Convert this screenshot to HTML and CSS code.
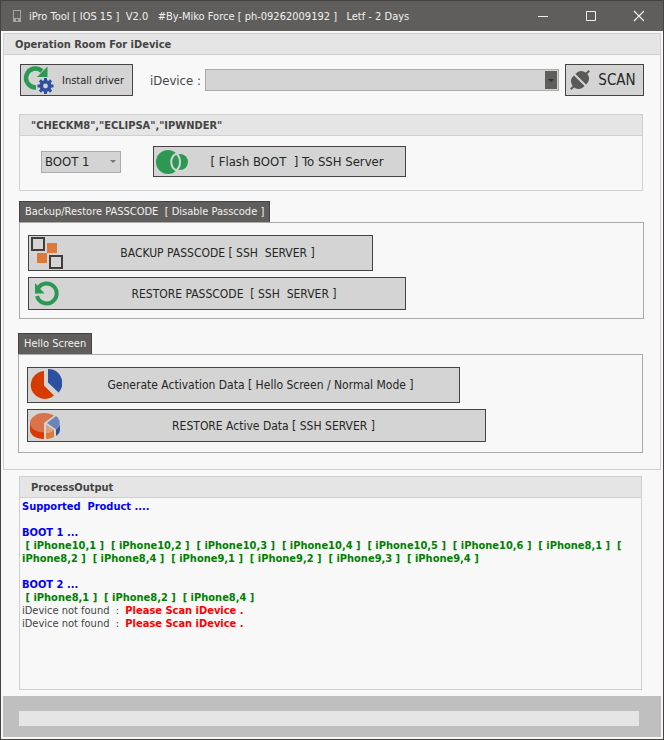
FILE: index.html
```
<!DOCTYPE html>
<html lang="en">
<head>
  <meta charset="UTF-8">
  <title>iPro Tool</title>
  <link rel="stylesheet" href="styles.css">
</head>
<body>
  <div class="window">
    <header class="titlebar">
      <svg class="app-icon" width="8" height="12" viewBox="0 0 8 12">
        <path fill="#a8a6a4" fill-rule="evenodd" d="M0 0h8v12H0zM1 1v7h6V1zM3 9v2h2V9z"/>
      </svg>
      <h1>iPro Tool [ IOS 15 ]  V2.0   #By-Miko Force [ ph-09262009192 ]   Letf - 2 Days</h1>
      <div class="window-buttons">
        <button type="button" aria-label="Minimize">
          <svg width="12" height="12" viewBox="0 0 12 12"><path d="M1 6.500h10" stroke="#f0f0f0"/></svg>
        </button>
        <button type="button" aria-label="Maximize">
          <svg width="12" height="12" viewBox="0 0 12 12"><path d="M1.500 1.500h9v9h-9z" fill="none" stroke="#f0f0f0"/></svg>
        </button>
        <button type="button" aria-label="Close">
          <svg width="12" height="12" viewBox="0 0 12 12"><path d="M1 1l10 10M11 1L1 11" fill="none" stroke="#f0f0f0" stroke-width="1.200"/></svg>
        </button>
      </div>
    </header>

    <main class="room">
      <h2 class="room-title">Operation Room For iDevice</h2>

      <div class="toolbar">
        <button type="button" class="btn install">
          <svg width="32" height="30" viewBox="0 0 32 30">
            <path d="M20 6A9.500 9.500 0 1 0 14 22.500" fill="none" stroke="#2c9852" stroke-width="4.500"/>
            <path d="M25.500 1.500v10.500H15z" fill="#2c9852"/>
            <circle cx="23.500" cy="21" r="4.200" fill="none" stroke="#2d50a0" stroke-width="3.600"/>
            <path d="M23.500 13v3M23.500 26v3M15.500 21h3M28.500 21h3M17.900 15.400l2 2M27.100 24.600l2 2M29.100 15.400l-2 2M19.900 24.600l-2 2" stroke="#2d50a0" stroke-width="3"/>
          </svg>
          <span>Install driver</span>
        </button>
        <label for="device">iDevice :</label>
        <div class="picker device-picker">
          <select id="device"><option></option></select>
          <span class="arrow"></span>
        </div>
        <button type="button" class="btn scan">
          <svg width="22" height="22" viewBox="0 0 22 22">
            <g transform="rotate(-45 11 11)" fill="#5a5958">
              <path d="M-2 10h5v2h-5zM19 10h5v2h-5z"/>
              <path d="M10 3.500v15H8.500A7 7.500 0 0 1 8.500 3.500z"/>
              <path d="M12 3.500v15h1.500a7 7.500 0 0 0 0-15z"/>
            </g>
          </svg>
          <span>SCAN</span>
        </button>
      </div>

      <section class="group">
        <h3 class="group-title">"CHECKM8","ECLIPSA","IPWNDER"</h3>
        <div class="boot-row">
          <div class="picker boot-picker">
            <select aria-label="Boot"><option>BOOT 1</option><option>BOOT 2</option></select>
            <span class="arrow"></span>
          </div>
          <button type="button" class="btn flash">
            <svg width="34" height="26" viewBox="0 0 34 26">
              <circle cx="13" cy="13" r="12" fill="#2c9852"/>
              <circle cx="25" cy="13" r="8" fill="#2c9852"/>
              <path d="M21.500 4.500a12 12 0 0 1 0 17a9.500 9.500 0 0 1 0-17z" fill="#2c9852" stroke="#d4d4d4" stroke-width="2"/>
            </svg>
            <span>[ Flash BOOT  ] To SSH Server</span>
          </button>
        </div>
      </section>

      <section class="tab-group">
        <h3 class="tab">Backup/Restore PASSCODE  [ Disable Passcode ]</h3>
        <div class="tab-body">
          <button type="button" class="btn tall backup">
            <svg width="34" height="34" viewBox="0 0 34 34">
              <path d="M18 7h10v10H18zM8 17h10v10H8z" fill="#dd7a3a"/>
              <path d="M3 2h12v12H3zM21 20h12v12H21z" fill="#d4d4d4" stroke="#3f3e3d" stroke-width="2"/>
            </svg>
            <span>BACKUP PASSCODE [ SSH  SERVER ]</span>
          </button>
          <button type="button" class="btn restore">
            <svg width="34" height="30" viewBox="0 0 34 30">
              <path d="M9 9.500A10 10 0 1 1 8 17" fill="none" stroke="#2c9852" stroke-width="4"/>
              <path d="M6 4v10.500h9.500z" fill="#2c9852"/>
            </svg>
            <span>RESTORE PASSCODE  [ SSH  SERVER ]</span>
          </button>
        </div>
      </section>

      <section class="tab-group">
        <h3 class="tab">Hello Screen</h3>
        <div class="tab-body">
          <button type="button" class="btn tall generate">
            <svg width="34" height="34" viewBox="0 0 34 34">
              <path d="M16 3v14.500l10 10A14 14 0 1 1 16 3z" fill="#d83b01"/>
              <path d="M20 1a14 14 0 0 1 10.500 23.500L20 14.500z" fill="#2d50a0"/>
            </svg>
            <span>Generate Activation Data [ Hello Screen / Normal Mode ]</span>
          </button>
          <button type="button" class="btn active-data">
            <svg width="34" height="30" viewBox="0 0 34 30">
              <path d="M2 12v7c0 5 6 9 14 9v-8z" fill="#d83b01"/>
              <path d="M16 12v9.500C8 21.500 2 17 2 12S8 2 16 2c4 0 7 1 10 2.500z" fill="#d9734c"/>
              <path d="M18 13.500V22c3 0 6-1 8-3z" fill="#dca077"/>
              <path d="M18 22c3 0 6-1 8-3v7c-2 1-5 2-8 2z" fill="#dd7a3a"/>
              <path d="M19 12l9-7c5 4 5 9 0 13.500z" fill="#6c85b8"/>
              <path d="M28 18.500c3-2.500 4-4 4-6.500v6c0 3-1 5-4 7z" fill="#2d50a0"/>
            </svg>
            <span>RESTORE Active Data [ SSH SERVER ]</span>
          </button>
        </div>
      </section>
    </main>

    <section class="group output">
      <h3 class="group-title">ProcessOutput</h3>
      <div class="log">
        <p class="info">Supported  Product ....</p>
        <p class="info"> </p>
        <p class="info">BOOT 1 ...</p>
        <p class="models"> [ iPhone10,1 ]  [ iPhone10,2 ]  [ iPhone10,3 ]  [ iPhone10,4 ]  [ iPhone10,5 ]  [ iPhone10,6 ]  [ iPhone8,1 ]  [ iPhone8,2 ]  [ iPhone8,4 ]  [ iPhone9,1 ]  [ iPhone9,2 ]  [ iPhone9,3 ]  [ iPhone9,4 ]</p>
        <p class="info"> </p>
        <p class="info">BOOT 2 ...</p>
        <p class="models"> [ iPhone8,1 ]  [ iPhone8,2 ]  [ iPhone8,4 ]</p>
        <p>iDevice not found  :  <strong>Please Scan iDevice .</strong></p>
        <p>iDevice not found  :  <strong>Please Scan iDevice .</strong></p>
      </div>
    </section>

    <footer class="statusbar">
      <progress value="0" max="100" aria-label="Progress"></progress>
    </footer>
  </div>
</body>
</html>
```

FILE: styles.css
```
* {
  box-sizing: border-box;
}

body {
  margin: 0;
  background: #f8f8f8;
  color: #444;
  font-family: "DejaVu Sans Condensed", "Noto Sans", sans-serif;
  font-size: 11px;
}

h1, h2, h3, p {
  margin: 0;
  font-size: 11px;
  white-space: pre-wrap;
}

button, select {
  font-family: inherit;
  color: #262626;
}

.window {
  display: flex;
  flex-direction: column;
  min-height: 100vh;
  border: 1px solid #444342;
}

/* title bar */
.titlebar {
  display: flex;
  align-items: center;
  height: 30px;
  padding-left: 12px;
  background: #5f5e5c;
  color: #f0f0f0;
}

.titlebar h1 {
  flex: 1;
  margin-left: 8px;
  font-weight: normal;
}

.window-buttons {
  display: flex;
}

.window-buttons button {
  display: flex;
  align-items: center;
  justify-content: center;
  width: 48px;
  height: 30px;
  padding: 0;
  border: none;
  background: none;
}

/* main panel */
.room {
  margin: 2px 2px 0;
  padding-bottom: 16px;
  border: 1px solid #d0d0d0;
}

.room-title,
.group-title {
  height: 21px;
  padding-left: 11px;
  background: #e5e5e5;
  border-bottom: 1px solid #d0d0d0;
  line-height: 21px;
}

.toolbar {
  display: flex;
  align-items: center;
  margin: 9px 16px 0;
}

.toolbar label {
  margin: 0 4px 0 17px;
  font-size: 13px;
}

.btn {
  display: flex;
  align-items: center;
  height: 33px;
  padding: 0 0 0 1px;
  border: 1px solid #444342;
  background: #d4d4d4;
  font-size: 12px;
  white-space: pre;
}

.btn svg {
  flex: none;
}

.btn span {
  flex: 1;
  text-align: center;
}

.install {
  width: 113px;
  height: 32px;
  font-size: 11px;
}

.scan {
  width: 79px;
  height: 32px;
  margin-left: 6px;
  padding-left: 3px;
  font-size: 15px;
}

.picker {
  position: relative;
  height: 22px;
}

.picker select {
  appearance: none;
  width: 100%;
  height: 22px;
  padding: 0 3px;
  border: 1px solid #ababab;
  border-radius: 0;
  background: #d4d4d4;
  font-size: 13px;
}

.picker .arrow {
  position: absolute;
  top: 2px;
  right: 2px;
  display: flex;
  align-items: center;
  justify-content: center;
  width: 12px;
  height: 18px;
  pointer-events: none;
}

.picker .arrow::after {
  content: "";
  border: 3px solid transparent;
  border-top-color: #777;
  border-bottom: none;
}

.device-picker {
  flex: 1;
}

.device-picker .arrow {
  background: #5f5e5c;
}

.device-picker .arrow::after {
  border-top-color: #333;
}

.boot-picker {
  width: 80px;
}

/* framed groups */
.group {
  margin: 18px 17px 0 15px;
  border: 1px solid #d0d0d0;
}

.boot-row {
  display: flex;
  align-items: center;
  gap: 32px;
  padding: 10px 21px 13px;
}

.flash {
  width: 253px;
  height: 31px;
  font-size: 13px;
}

/* tabbed groups */
.tab-group {
  margin: 10px 16px 0 15px;
}

.tab-group + .tab-group {
  margin: 14px 17px 0 14px;
}

.tab {
  width: fit-content;
  height: 21px;
  padding: 0 5px;
  border: 1px solid #444342;
  border-bottom: none;
  background: #5f5e5c;
  color: #f0f0f0;
  font-weight: normal;
  line-height: 20px;
}

.tab-body {
  display: flex;
  flex-direction: column;
  align-items: flex-start;
  gap: 6px;
  padding: 12px 8px 8px;
  border: 1px solid #ababab;
}

.tab-group + .tab-group .tab-body {
  padding-bottom: 10px;
}

.tab-body .btn {
  padding: 0;
}

.tall {
  height: 36px;
}

.backup {
  width: 345px;
}

.restore {
  width: 378px;
}

.generate {
  width: 433px;
}

.active-data {
  width: 459px;
}

/* output */
.output {
  flex: 1;
  margin: 6px 21px 6px 18px;
}

.log {
  padding: 2px;
}

.log p {
  min-height: 13px;
  line-height: 13px;
}

.log .info {
  color: #00f;
  font-weight: bold;
}

.log .models {
  color: #008000;
  font-weight: bold;
}

.log strong {
  color: #f00;
}

/* footer */
.statusbar {
  height: 41px;
  margin: 0 2px 2px;
  padding: 15px 22px 0 16px;
  background: #bfbfbf;
}

.statusbar progress {
  appearance: none;
  display: block;
  width: 100%;
  height: 15px;
  border: none;
  background: #e5e5e5;
}

.statusbar progress::-webkit-progress-bar {
  background: #e5e5e5;
}
```
